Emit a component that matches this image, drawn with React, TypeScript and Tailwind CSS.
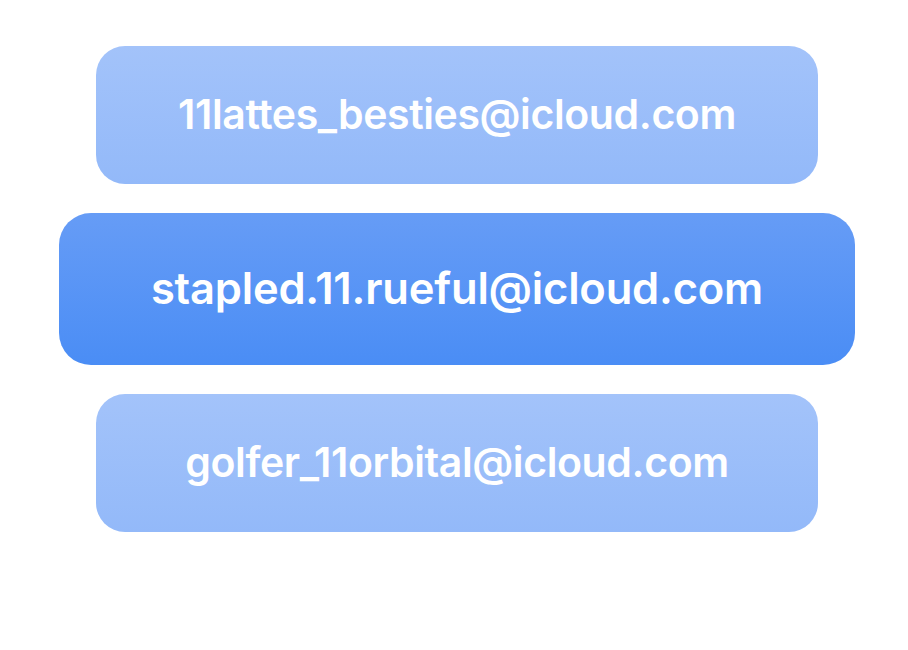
import React from 'react';

const emails = [
  { address: '11lattes_besties@icloud.com', selected: false },
  { address: 'stapled.11.rueful@icloud.com', selected: true },
  { address: 'golfer_11orbital@icloud.com', selected: false },
];

export default function App() {
  return (
    <div
      className="flex min-h-[650px] w-[908px] flex-col items-center gap-[29px] bg-white pl-[6px] pt-[46px]"
      style={{ fontFamily: 'Inter, "Noto Sans", sans-serif' }}
    >
      {emails.map((e) =>
        e.selected ? (
          <div
            key={e.address}
            className="flex h-[152px] w-[796px] items-center justify-center rounded-[32px] bg-gradient-to-b from-[#669cf6] to-[#4a8df5]"
          >
            <span className="text-[43.5px] font-semibold tracking-[-0.2px] text-white">{e.address}</span>
          </div>
        ) : (
          <div
            key={e.address}
            className="flex h-[138px] w-[722px] items-center justify-center rounded-[29px] bg-gradient-to-b from-[#a3c3fa] to-[#93b9f9]"
          >
            <span className="text-[41px] font-semibold tracking-[-0.4px] text-white">{e.address}</span>
          </div>
        ),
      )}
    </div>
  );
}
